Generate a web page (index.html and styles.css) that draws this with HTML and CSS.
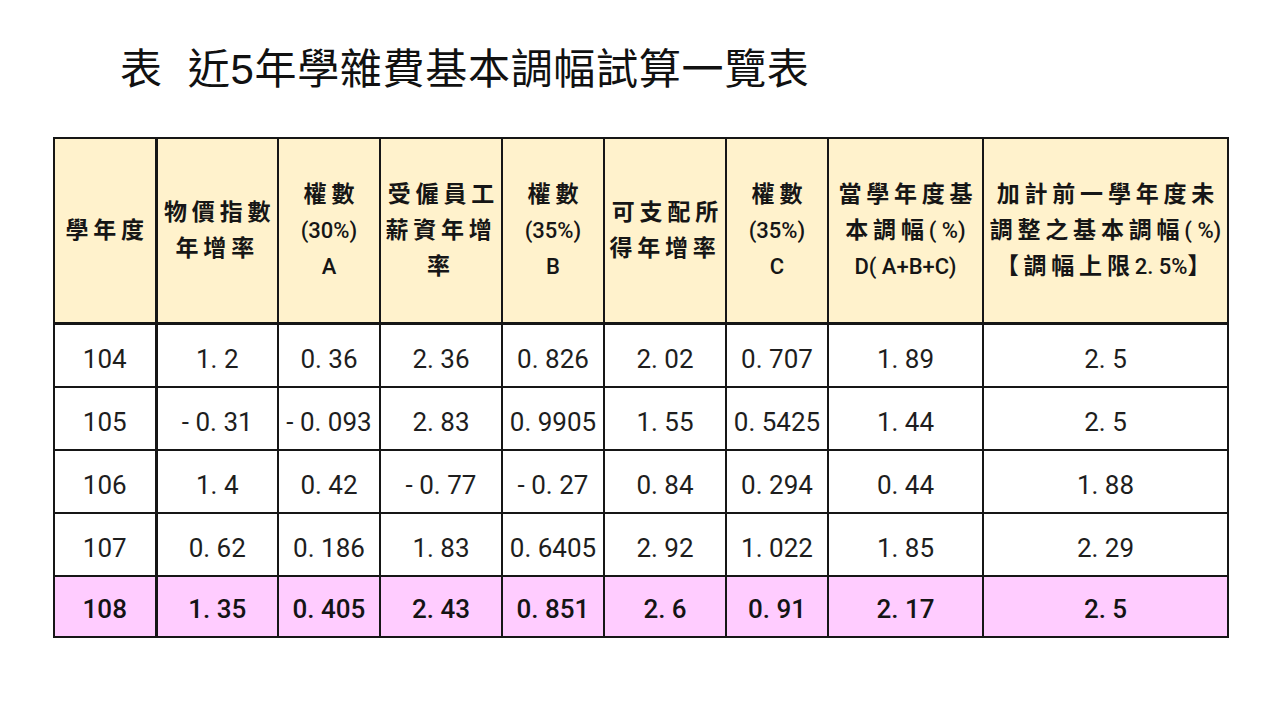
FILE: index.html
```html
<!DOCTYPE html>
<html lang="zh-Hant">
<head>
<meta charset="utf-8">
<title>近5年學雜費基本調幅試算一覽表</title>
<link rel="stylesheet" href="styles.css">
</head>
<body>
<div class="page">
  <h1 class="title"><span class="t-lead">表</span>近5年學雜費基本調幅試算一覽表</h1>
  <table class="grid">
    <colgroup>
      <col class="w-a"><col class="w-b"><col class="w-a"><col class="w-b"><col class="w-a"><col class="w-b"><col class="w-a"><col class="w-c"><col class="w-d">
    </colgroup>
    <thead>
      <tr class="head">
        <th class="first">學年度</th>
        <th>物價指數<br>年增率</th>
        <th>權數<br><span class="lat">(30%)</span><br><span class="lat">A</span></th>
        <th>受僱員工<br>薪資年增<br>率</th>
        <th>權數<br><span class="lat">(35%)</span><br><span class="lat">B</span></th>
        <th>可支配所<br>得年增率</th>
        <th>權數<br><span class="lat">(35%)</span><br><span class="lat">C</span></th>
        <th>當學年度基<br>本調幅<span class="lat">( %)</span><br><span class="lat">D( A+B+C)</span></th>
        <th>加計前一學年度未<br>調整之基本調幅<span class="lat">( %)</span><br>【調幅上限<span class="lat">2. 5%</span>】</th>
      </tr>
    </thead>
    <tbody>
      <tr>
        <td class="first">104</td><td>1. 2</td><td>0. 36</td><td>2. 36</td><td>0. 826</td><td>2. 02</td><td>0. 707</td><td>1. 89</td><td>2. 5</td>
      </tr>
      <tr>
        <td class="first">105</td><td>- 0. 31</td><td>- 0. 093</td><td>2. 83</td><td>0. 9905</td><td>1. 55</td><td>0. 5425</td><td>1. 44</td><td>2. 5</td>
      </tr>
      <tr>
        <td class="first">106</td><td>1. 4</td><td>0. 42</td><td>- 0. 77</td><td>- 0. 27</td><td>0. 84</td><td>0. 294</td><td>0. 44</td><td>1. 88</td>
      </tr>
      <tr>
        <td class="first">107</td><td>0. 62</td><td>0. 186</td><td>1. 83</td><td>0. 6405</td><td>2. 92</td><td>1. 022</td><td>1. 85</td><td>2. 29</td>
      </tr>
      <tr class="hl">
        <td class="first">108</td><td>1. 35</td><td>0. 405</td><td>2. 43</td><td>0. 851</td><td>2. 6</td><td>0. 91</td><td>2. 17</td><td>2. 5</td>
      </tr>
    </tbody>
  </table>
</div>
</body>
</html>
```

FILE: styles.css
```css
html, body {
  margin: 0;
  padding: 0;
  background: #ffffff;
}

.page {
  width: 1280px;
  height: 720px;
  padding-top: 41px;
  box-sizing: border-box;
}

.title {
  margin: 0 0 0 120px;
  font-family: "Liberation Sans", "Noto Sans CJK TC", sans-serif;
  font-weight: 400;
  font-size: 42px;
  line-height: 58px;
  color: #111111;
  letter-spacing: 0.7px;
}

.t-lead {
  margin-right: 25px;
}

.grid {
  margin: 38px 0 0 53px;
  width: 1174px;
  table-layout: fixed;
  border-collapse: collapse;
  font-family: "Roboto", "Noto Sans CJK TC", sans-serif;
  color: #1e1e1e;
}

.w-a { width: 102px; }
.w-b { width: 122px; }
.w-c { width: 155px; }
.w-d { width: 245px; }

.grid th,
.grid td {
  border: 2px solid #161616;
  text-align: center;
  vertical-align: middle;
  padding: 0;
}

.head th {
  height: 183px;
  background: #fff2cc;
  font-size: 23px;
  font-weight: 700;
  line-height: 36px;
  letter-spacing: 4.8px;
  text-indent: 4.8px;
  color: #161616;
  border-bottom-width: 3px;
}

.lat {
  letter-spacing: 0;
  font-weight: 500;
  font-size: 22px;
}

.grid .first {
  border-right-width: 3px;
}

.grid td {
  height: 55px;
  font-size: 26px;
  line-height: 30px;
  font-weight: 400;
  padding-top: 6px;
}

.hl td {
  height: 54px;
  padding-top: 5px;
  background: #ffccff;
  font-weight: 500;
  color: #141414;
}
```
